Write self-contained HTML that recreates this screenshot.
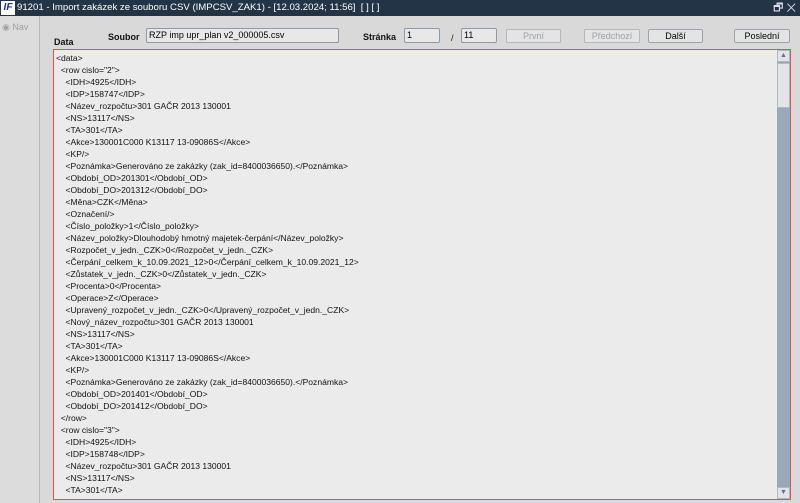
<!DOCTYPE html>
<html><head><meta charset="utf-8"><style>
*{margin:0;padding:0;box-sizing:border-box}
body{width:800px;height:503px;overflow:hidden;background:#d9d9d9;font-family:"Liberation Sans",Arial,sans-serif;position:relative}
.tb{position:absolute;left:0;top:0;width:800px;height:16px;background:#243447;color:#fff;font-size:9.6px;line-height:16px;padding-left:17px;white-space:nowrap}
.logo{position:absolute;left:1px;top:1px;width:14px;height:14px;background:#fff;color:#1c2fa8;font-weight:bold;font-style:italic;font-size:10px;line-height:14px;text-align:center}
.win{position:absolute;right:4px;top:0;font-size:11px;color:#dde}
.left{position:absolute;left:0;top:16px;width:40px;height:487px;background:#dcdcdc;border-right:1px solid #b8b8b8}
.nav{position:absolute;left:2px;top:6px;font-size:9px;color:#a0a0a0}
.lbl{position:absolute;font-size:9px;font-weight:bold;color:#111}
.inp{position:absolute;height:15px;border:1px solid #8a9bb0;background:#e8e8e8;font-size:9px;line-height:13px;padding-left:2px;border-radius:2px}
.btn{position:absolute;top:29px;height:14px;border:1px solid #98a4b4;background:#e4e4e4;font-size:9px;line-height:12px;text-align:center;border-radius:2px}
.dis{color:#9aa2b0;border-color:#b0b8c4}
.ta{position:absolute;left:53px;top:49px;width:738px;height:451px;border:1px solid #e05050;background:#ebebeb}
.txt{position:absolute;left:2px;top:2px;font-size:8.55px;line-height:12px;color:#111;white-space:pre}
.sb{position:absolute;right:0;top:0;width:13px;height:449px;background:#9aa8bb}
.sbb{position:absolute;left:0;width:13px;height:12px;background:#e2e4e8;border:1px solid #b0b8c4}
.th{position:absolute;left:0;top:13px;width:13px;height:45px;background:#e2e4e8;border:1px solid #b0b8c4}
</style></head><body>
<div class="tb"><div class="logo">IF</div>91201 - Import zakázek ze souboru CSV (IMPCSV_ZAK1) - [12.03.2024; 11:56]&nbsp; [ ] [ ]<div class="win">🗗 ✕</div></div>
<div class="left"><div class="nav">◉ Nav</div></div>
<div class="lbl" style="left:54px;top:37px">Data</div>
<div class="lbl" style="left:108px;top:32px">Soubor</div>
<div class="inp" style="left:146px;top:28px;width:193px">RZP imp upr_plan v2_000005.csv</div>
<div class="lbl" style="left:363px;top:32px">Stránka</div>
<div class="inp" style="left:404px;top:28px;width:36px">1</div>
<div class="lbl" style="left:451px;top:33px;font-weight:normal">/</div>
<div class="inp" style="left:461px;top:28px;width:36px">11</div>
<div class="btn dis" style="left:506px;width:55px">První</div>
<div class="btn dis" style="left:584px;width:56px">Předchozí</div>
<div class="btn" style="left:648px;width:55px">Další</div>
<div class="btn" style="left:734px;width:56px">Poslední</div>
<div class="ta"><div class="txt">&lt;data&gt;
  &lt;row cislo="2"&gt;
    &lt;IDH&gt;4925&lt;/IDH&gt;
    &lt;IDP&gt;158747&lt;/IDP&gt;
    &lt;Název_rozpočtu&gt;301 GAČR 2013 130001
    &lt;NS&gt;13117&lt;/NS&gt;
    &lt;TA&gt;301&lt;/TA&gt;
    &lt;Akce&gt;130001C000 K13117 13-09086S&lt;/Akce&gt;
    &lt;KP/&gt;
    &lt;Poznámka&gt;Generováno ze zakázky (zak_id=8400036650).&lt;/Poznámka&gt;
    &lt;Období_OD&gt;201301&lt;/Období_OD&gt;
    &lt;Období_DO&gt;201312&lt;/Období_DO&gt;
    &lt;Měna&gt;CZK&lt;/Měna&gt;
    &lt;Označení/&gt;
    &lt;Číslo_položky&gt;1&lt;/Číslo_položky&gt;
    &lt;Název_položky&gt;Dlouhodobý hmotný majetek-čerpání&lt;/Název_položky&gt;
    &lt;Rozpočet_v_jedn._CZK&gt;0&lt;/Rozpočet_v_jedn._CZK&gt;
    &lt;Čerpání_celkem_k_10.09.2021_12&gt;0&lt;/Čerpání_celkem_k_10.09.2021_12&gt;
    &lt;Zůstatek_v_jedn._CZK&gt;0&lt;/Zůstatek_v_jedn._CZK&gt;
    &lt;Procenta&gt;0&lt;/Procenta&gt;
    &lt;Operace&gt;Z&lt;/Operace&gt;
    &lt;Upravený_rozpočet_v_jedn._CZK&gt;0&lt;/Upravený_rozpočet_v_jedn._CZK&gt;
    &lt;Nový_název_rozpočtu&gt;301 GAČR 2013 130001
    &lt;NS&gt;13117&lt;/NS&gt;
    &lt;TA&gt;301&lt;/TA&gt;
    &lt;Akce&gt;130001C000 K13117 13-09086S&lt;/Akce&gt;
    &lt;KP/&gt;
    &lt;Poznámka&gt;Generováno ze zakázky (zak_id=8400036650).&lt;/Poznámka&gt;
    &lt;Období_OD&gt;201401&lt;/Období_OD&gt;
    &lt;Období_DO&gt;201412&lt;/Období_DO&gt;
  &lt;/row&gt;
  &lt;row cislo="3"&gt;
    &lt;IDH&gt;4925&lt;/IDH&gt;
    &lt;IDP&gt;158748&lt;/IDP&gt;
    &lt;Název_rozpočtu&gt;301 GAČR 2013 130001
    &lt;NS&gt;13117&lt;/NS&gt;
    &lt;TA&gt;301&lt;/TA&gt;</div>
<div class="sb"><div class="sbb" style="top:0;font-size:7px;text-align:center;color:#607090;line-height:10px">▲</div><div class="th"></div><div class="sbb" style="bottom:0;font-size:7px;text-align:center;color:#607090;line-height:10px">▼</div></div>
</div>
</body></html>
